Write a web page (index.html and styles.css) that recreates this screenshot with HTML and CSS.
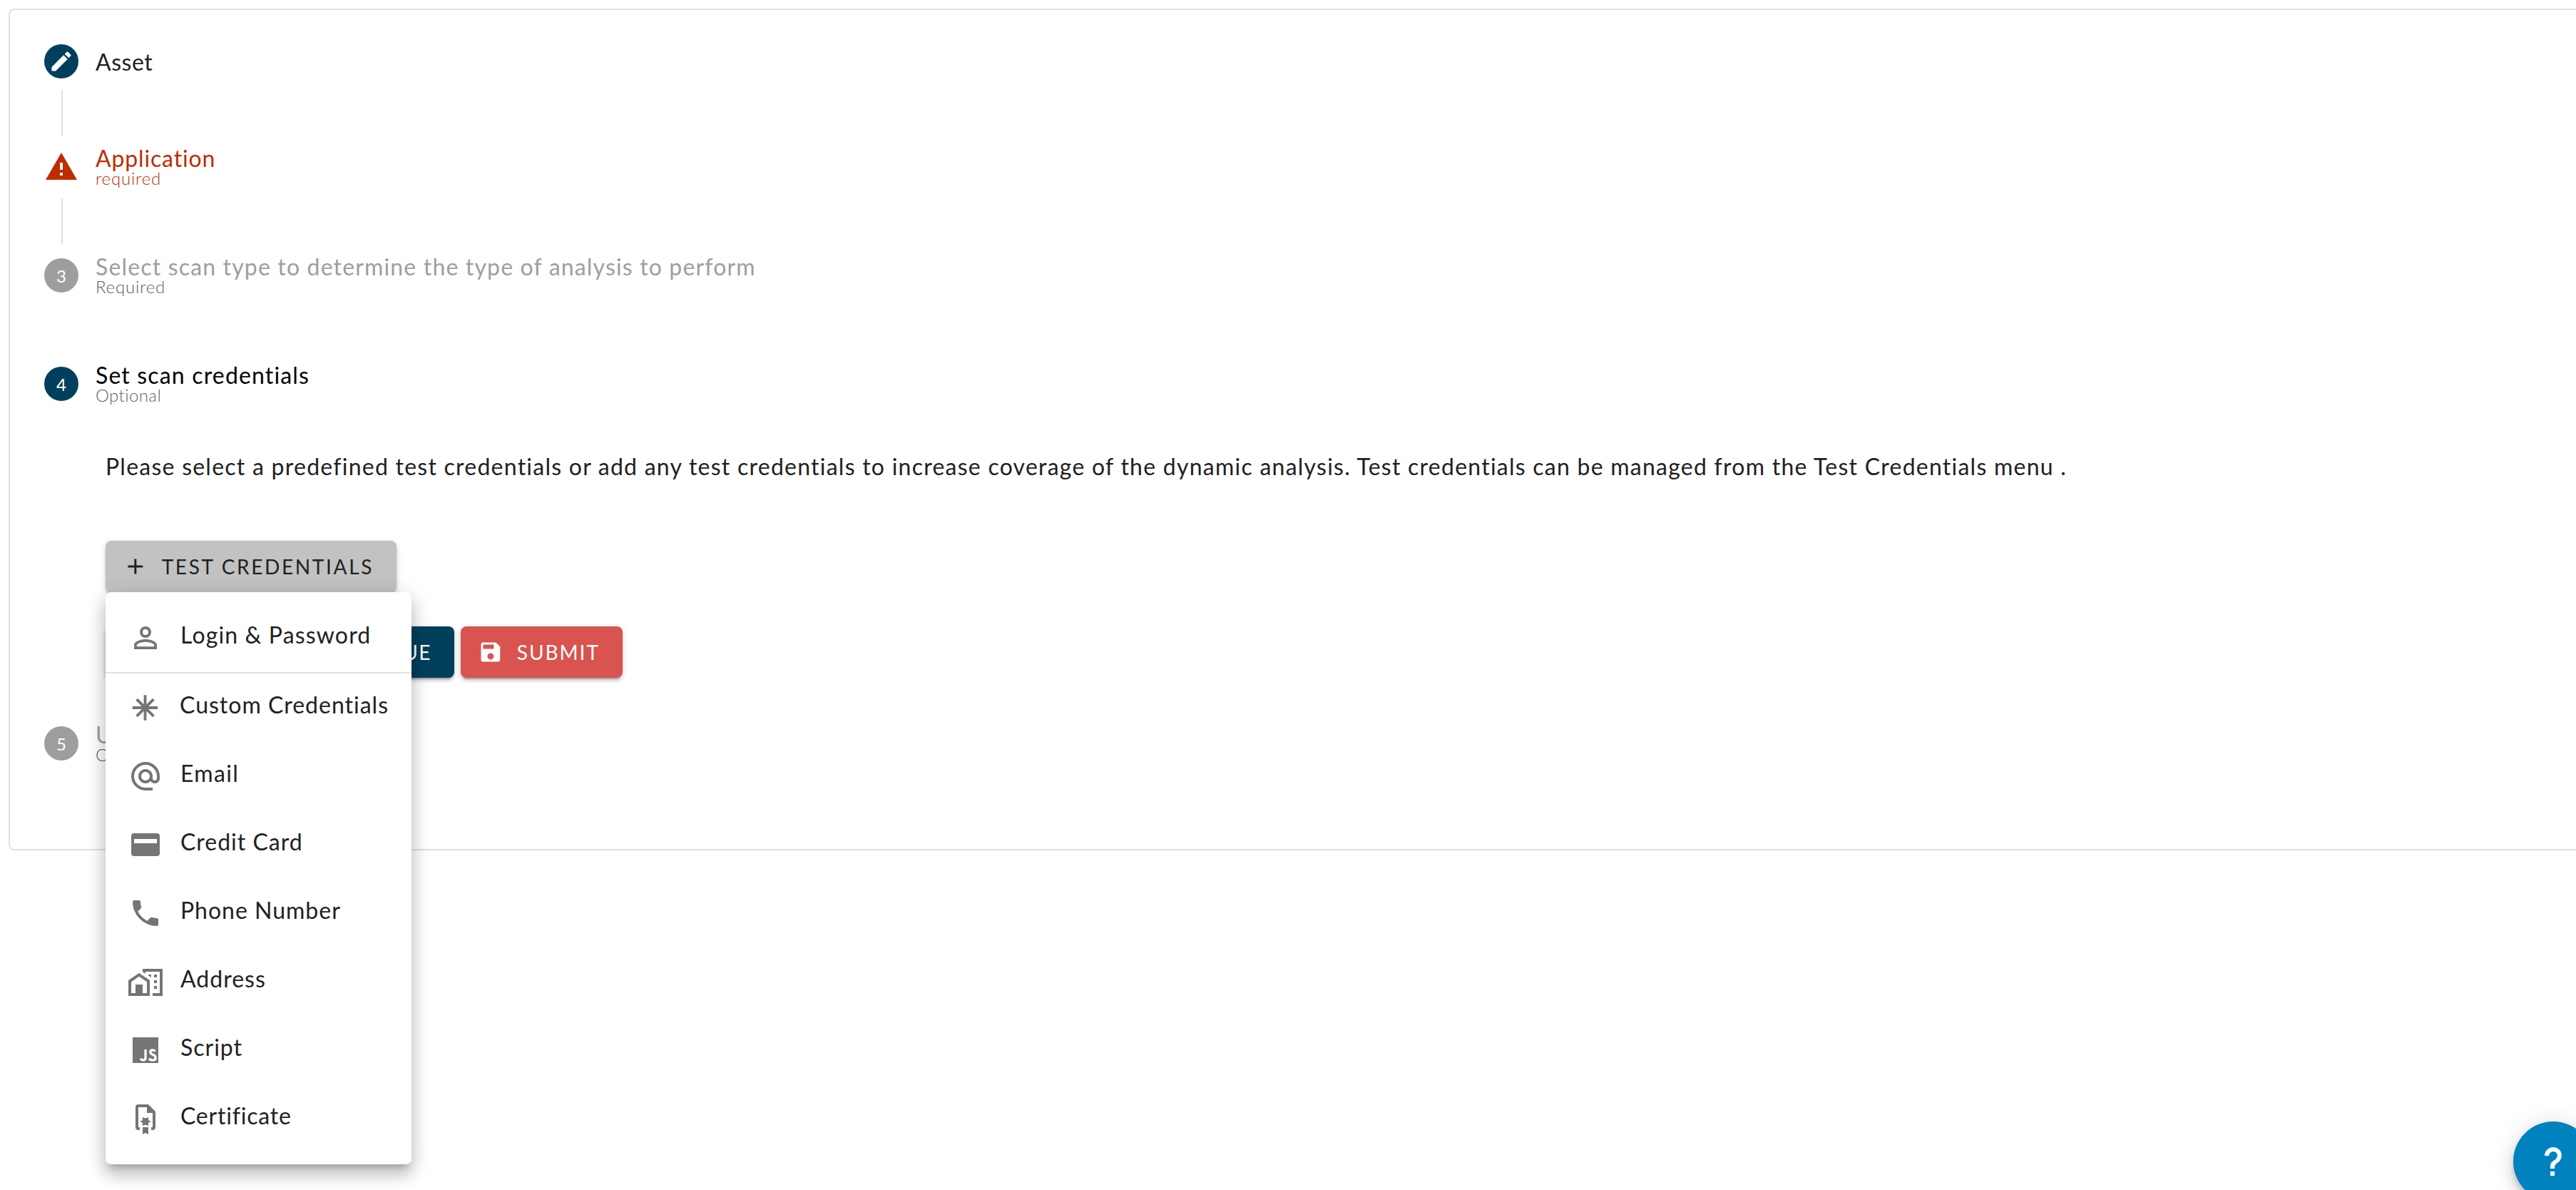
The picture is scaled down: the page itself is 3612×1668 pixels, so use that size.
FILE: index.html
```
<!DOCTYPE html>
<html lang="en">
<head>
    <meta charset="UTF-8">
    <meta name="viewport" content="width=device-width, initial-scale=1.0">
    <title>New scan</title>
    <link rel="stylesheet" href="styles.css">
</head>
<body>
    <main class="stepper">
        <section class="step step-single">
            <span class="badge badge-primary">
                <svg viewBox="0 0 24 24" class="badge-icon"><path d="M20.71,7.04C21.1,6.65 21.1,6 20.71,5.63L18.37,3.29C18,2.9 17.35,2.9 16.96,3.29L15.12,5.12L18.87,8.87M3,17.25V21H6.75L17.81,9.93L14.06,6.18L3,17.25Z"/></svg>
            </span>
            <div class="label"><span class="title title-asset">Asset</span></div>
        </section>
        <div class="connector"></div>

        <section class="step step-error">
            <svg viewBox="0 0 24 24" class="alert-icon"><path d="M13 14H11V9H13M13 18H11V16H13M1 21H23L12 2L1 21Z"/></svg>
            <div class="label">
                <span class="title title-app">Application</span>
                <small>required</small>
            </div>
        </section>
        <div class="connector"></div>

        <section class="step step-inactive">
            <span class="badge">3</span>
            <div class="label">
                <span class="title">Select scan type to determine the type of analysis to perform</span>
                <small>Required</small>
            </div>
        </section>

        <section class="step step-active">
            <span class="badge badge-primary">4</span>
            <div class="label">
                <span class="title">Set scan credentials</span>
                <small class="optional">Optional</small>
            </div>
        </section>

        <div class="content">
            <p class="intro">Please select a predefined test credentials or add any test credentials to increase coverage of the dynamic analysis. Test credentials can be managed from the Test Credentials menu .</p>

            <div class="dropdown">
                <button class="btn btn-grey">
                    <svg viewBox="0 0 24 24"><path d="M19,13H13V19H11V13H5V11H11V5H13V11H19V13Z"/></svg>
                    Test Credentials
                </button>
                <ul class="menu">
                    <li class="divided">
                        <svg viewBox="0 0 24 24"><path d="M12,4A4,4 0 0,1 16,8A4,4 0 0,1 12,12A4,4 0 0,1 8,8A4,4 0 0,1 12,4M12,6A2,2 0 0,0 10,8A2,2 0 0,0 12,10A2,2 0 0,0 14,8A2,2 0 0,0 12,6M12,13C14.67,13 20,14.33 20,17V20H4V17C4,14.33 9.33,13 12,13M12,14.9C9.03,14.9 5.9,16.36 5.9,17V18.1H18.1V17C18.1,16.36 14.97,14.9 12,14.9Z"/></svg>
                        <span class="m-login">Login &amp; Password</span>
                    </li>
                    <li>
                        <svg viewBox="0 0 24 24"><path d="M11 3H13V9.59L17.36 5.22L18.78 6.64L14.41 11H21V13H14.41L18.78 17.36L17.36 18.78L13 14.41V21H11V14.41L6.64 18.78L5.22 17.36L9.59 13H3V11H9.59L5.22 6.64L6.64 5.22L11 9.59Z"/></svg>
                        <span>Custom Credentials</span>
                    </li>
                    <li>
                        <svg viewBox="0 0 24 24"><path d="M12,15C12.81,15 13.5,14.7 14.11,14.11C14.7,13.5 15,12.81 15,12C15,11.19 14.7,10.5 14.11,9.89C13.5,9.3 12.81,9 12,9C11.19,9 10.5,9.3 9.89,9.89C9.3,10.5 9,11.19 9,12C9,12.81 9.3,13.5 9.89,14.11C10.5,14.7 11.19,15 12,15M12,2C14.75,2 17.1,3 19.05,4.95C21,6.9 22,9.25 22,12V13.45C22,14.45 21.65,15.3 21,16C20.3,16.67 19.5,17 18.5,17C17.3,17 16.31,16.5 15.56,15.5C14.56,16.5 13.38,17 12,17C10.63,17 9.45,16.5 8.46,15.54C7.5,14.55 7,13.38 7,12C7,10.63 7.5,9.45 8.46,8.46C9.45,7.5 10.63,7 12,7C13.38,7 14.55,7.5 15.54,8.46C16.5,9.45 17,10.63 17,12V13.45C17,13.86 17.16,14.22 17.46,14.53C17.76,14.84 18.11,15 18.5,15C18.92,15 19.27,14.84 19.57,14.53C19.87,14.22 20,13.86 20,13.45V12C20,9.81 19.23,7.93 17.65,6.35C16.07,4.77 14.19,4 12,4C9.81,4 7.93,4.77 6.35,6.35C4.77,7.93 4,9.81 4,12C4,14.19 4.77,16.07 6.35,17.65C7.93,19.23 9.81,20 12,20H17V22H12C9.25,22 6.9,21 4.95,19.05C3,17.1 2,14.75 2,12C2,9.25 3,6.9 4.95,4.95C6.9,3 9.25,2 12,2Z"/></svg>
                        <span class="m-email">Email</span>
                    </li>
                    <li>
                        <svg viewBox="0 0 24 24"><path d="M4 4H20A2 2 0 0 1 22 6V18A2 2 0 0 1 20 20H4A2 2 0 0 1 2 18V6A2 2 0 0 1 4 4M4 8V11H20V8Z" fill-rule="evenodd"/></svg>
                        <span>Credit Card</span>
                    </li>
                    <li>
                        <svg viewBox="0 0 24 24"><path d="M6.62,10.79C8.06,13.62 10.38,15.94 13.21,17.38L15.41,15.18C15.69,14.9 16.08,14.82 16.43,14.93C17.55,15.3 18.75,15.5 20,15.5A1,1 0 0,1 21,16.5V20A1,1 0 0,1 20,21A17,17 0 0,1 3,4A1,1 0 0,1 4,3H7.5A1,1 0 0,1 8.5,4C8.5,5.25 8.7,6.45 9.07,7.57C9.18,7.92 9.1,8.31 8.82,8.59L6.62,10.79Z"/></svg>
                        <span>Phone Number</span>
                    </li>
                    <li>
                        <svg viewBox="0 0 24 24" fill-rule="evenodd"><path d="M0 11L7.5 6L15 11V22H0ZM2 12.1V20H5V14H10V20H13V12.1L7.5 8.4Z"/><path d="M10 3H24V22H17V20H22V5H12V6.4L10 5.1ZM14 7H16V9L14 7.7ZM18 7H20V9H18ZM18 11H20V13H18ZM18 15H20V17H18Z"/></svg>
                        <span>Address</span>
                    </li>
                    <li>
                        <svg viewBox="0 0 24 24"><path d="M3 3H21V21H3Z"/><path class="js-mark" d="M12 11.5V17.4Q12 19 10.5 19Q9.1 19 8.5 17.9M18.8 12.8Q18.3 11.9 17.1 11.9Q15.4 11.9 15.4 13.3Q15.4 14.5 17.1 15.1Q19.1 15.8 19.1 17.2Q19.1 19 17.1 19Q15.3 19 14.6 17.8"/></svg>
                        <span>Script</span>
                    </li>
                    <li>
                        <svg viewBox="0 0 24 24"><path d="M14 2L19 7V18A2 2 0 0 1 17 20H16V18H17V8H13V4H7V18H8V20H7A2 2 0 0 1 5 18V4A2 2 0 0 1 7 2ZM8 14L10 13.1L9.9 11L12 11.7L14.1 11L14 13.1L16 14L14 14.9L14.1 17L12 16.3L9.9 17L10 14.9ZM10 18H14V23L12 22L10 23Z"/></svg>
                        <span class="m-cert">Certificate</span>
                    </li>
                </ul>
            </div>

            <div class="actions">
                <button class="btn btn-back" aria-label="Back"></button>
                <button class="btn btn-continue">Continue</button>
                <button class="btn btn-submit">
                    <svg viewBox="0 0 24 24"><path d="M15,9H5V5H15M12,19A3,3 0 0,1 9,16A3,3 0 0,1 12,13A3,3 0 0,1 15,16A3,3 0 0,1 12,19M17,3H5C3.89,3 3,3.9 3,5V19A2,2 0 0,0 5,21H19A2,2 0 0,0 21,19V7L17,3Z"/></svg>
                    Submit
                </button>
            </div>
        </div>

        <section class="step step-inactive">
            <span class="badge">5</span>
            <div class="label">
                <span class="title">Upload</span>
                <small class="optional">Optional</small>
            </div>
        </section>
    </main>

    <button class="help" aria-label="Help">
        <svg viewBox="0 0 24 24"><path d="M10,19H13V22H10V19M12,2C17.35,2.22 19.68,7.62 16.5,11.67C15.67,12.67 14.33,13.33 13.67,14.17C13,15 13,16 13,17H10C10,15.33 10,13.92 10.67,12.92C11.33,11.92 12.67,11.33 13.5,10.67C15.92,8.43 15.32,5.26 12,5A3,3 0 0,0 9,8H6A6,6 0 0,1 12,2Z"/></svg>
    </button>
</body>
</html>
```
FILE: styles.css
```
:root {
    --primary: #00405c;
    --error: #bf2c00;
    --danger: #d9534f;
    --text: #212121;
    --grey: #9e9e9e;
    --line: #e0e0e0;
}

* {
    box-sizing: border-box;
}

body {
    font-family: Lato, "Open Sans", sans-serif;
    font-size: 32px;
    color: var(--text);
    background: #fff;
    margin: 0;
    padding: 12px 0 0 12px;
    height: 1668px;
    overflow: hidden;
}

svg {
    display: block;
    fill: currentColor;
}

.stepper {
    width: 3640px;
    height: 1180px;
    border: 2px solid var(--line);
    border-radius: 8px;
}

/* Steps */
.step {
    display: flex;
    align-items: center;
    gap: 24px;
    height: 152px;
    padding: 0 48px;
}

.step-single {
    height: 144px;
}

.badge {
    display: flex;
    justify-content: center;
    align-items: center;
    width: 48px;
    height: 48px;
    border-radius: 50%;
    background: var(--grey);
    color: #fff;
    font-size: 24px;
}

.badge-primary {
    background: var(--primary);
}

.badge-icon {
    width: 36px;
    height: 36px;
}

.alert-icon {
    width: 48px;
    height: 48px;
}

.label {
    display: flex;
    flex-direction: column;
    height: 56px;
    white-space: nowrap;
}

.title {
    line-height: 32px;
    letter-spacing: 1.16px;
}

.title-asset {
    letter-spacing: 0.5px;
}

.title-app {
    letter-spacing: 0.85px;
}

.label small {
    font-size: 24px;
    font-weight: 300;
    line-height: 24px;
    letter-spacing: 0.8px;
    color: #616161;
}

.label .optional {
    letter-spacing: 0.4px;
}

.step-single .label {
    height: 32px;
    margin-top: 2px;
}

.step-error,
.step-error .label small {
    color: var(--error);
}

.step-inactive .title {
    color: var(--grey);
}

.step-active .title {
    color: #000;
}

.connector {
    width: 2px;
    height: 64px;
    margin: -32px 0 -32px 72px;
    background: var(--line);
}

/* Step 4 content */
.content {
    height: 352px;
    padding: 24px 0 0 134px;
}

.intro {
    margin: 0 0 88px;
    line-height: 32px;
    letter-spacing: 1.245px;
    white-space: nowrap;
}

.dropdown {
    position: relative;
    margin-bottom: 48px;
}

.btn {
    display: flex;
    align-items: center;
    height: 72px;
    padding: 0 32px;
    border: none;
    border-radius: 8px;
    font-family: inherit;
    font-size: 28px;
    letter-spacing: 2.65px;
    text-transform: uppercase;
    white-space: nowrap;
    color: #fff;
    box-shadow: 0 6px 2px -4px rgba(0,0,0,0.2), 0 4px 4px rgba(0,0,0,0.14), 0 2px 10px rgba(0,0,0,0.12);
}

.btn svg {
    width: 36px;
    height: 36px;
    margin: 0 19px 0 -8px;
}

.btn-grey {
    width: 408px;
    background: #c2c2c2;
    color: var(--text);
}

.actions {
    display: flex;
    gap: 9px;
}

.btn-back {
    width: 200px;
    background: #f5f5f5;
}

.btn-continue {
    width: 280px;
    justify-content: flex-end;
    letter-spacing: 1.5px;
    background: var(--primary);
}

.btn-submit {
    width: 227px;
    letter-spacing: 2px;
    background: var(--danger);
}

/* Dropdown menu */
.menu {
    position: absolute;
    top: 72px;
    left: 0;
    z-index: 2;
    width: 429px;
    margin: 0;
    padding: 16px 0;
    list-style: none;
    background: #fff;
    border-radius: 8px;
    box-shadow: 0 10px 10px -6px rgba(0,0,0,0.2), 0 16px 20px 2px rgba(0,0,0,0.14), 0 6px 28px 4px rgba(0,0,0,0.12);
}

.menu li {
    display: flex;
    align-items: center;
    gap: 25px;
    height: 96px;
    padding: 0 32px;
    letter-spacing: 1px;
    white-space: nowrap;
}

.menu .divided {
    height: 98px;
    border-bottom: 2px solid var(--line);
}

.menu svg {
    width: 48px;
    height: 48px;
    color: #757575;
}

.menu span {
    margin-top: -9px;
}

.menu .m-login {
    letter-spacing: 1.15px;
}

.menu .m-email {
    letter-spacing: 1.3px;
}

.menu .m-cert {
    letter-spacing: 0.8px;
}

.js-mark {
    fill: none;
    stroke: #fff;
    stroke-width: 1.6;
}

/* Help button */
.help {
    position: fixed;
    left: 3524px;
    top: 1572px;
    width: 112px;
    height: 112px;
    padding: 32px;
    border: none;
    border-radius: 50%;
    background: #0082be;
    color: #fff;
    box-shadow: 0 6px 10px -2px rgba(0,0,0,0.2), 0 12px 20px rgba(0,0,0,0.14), 0 2px 36px rgba(0,0,0,0.12);
}

.help svg {
    width: 48px;
    height: 48px;
}
```
